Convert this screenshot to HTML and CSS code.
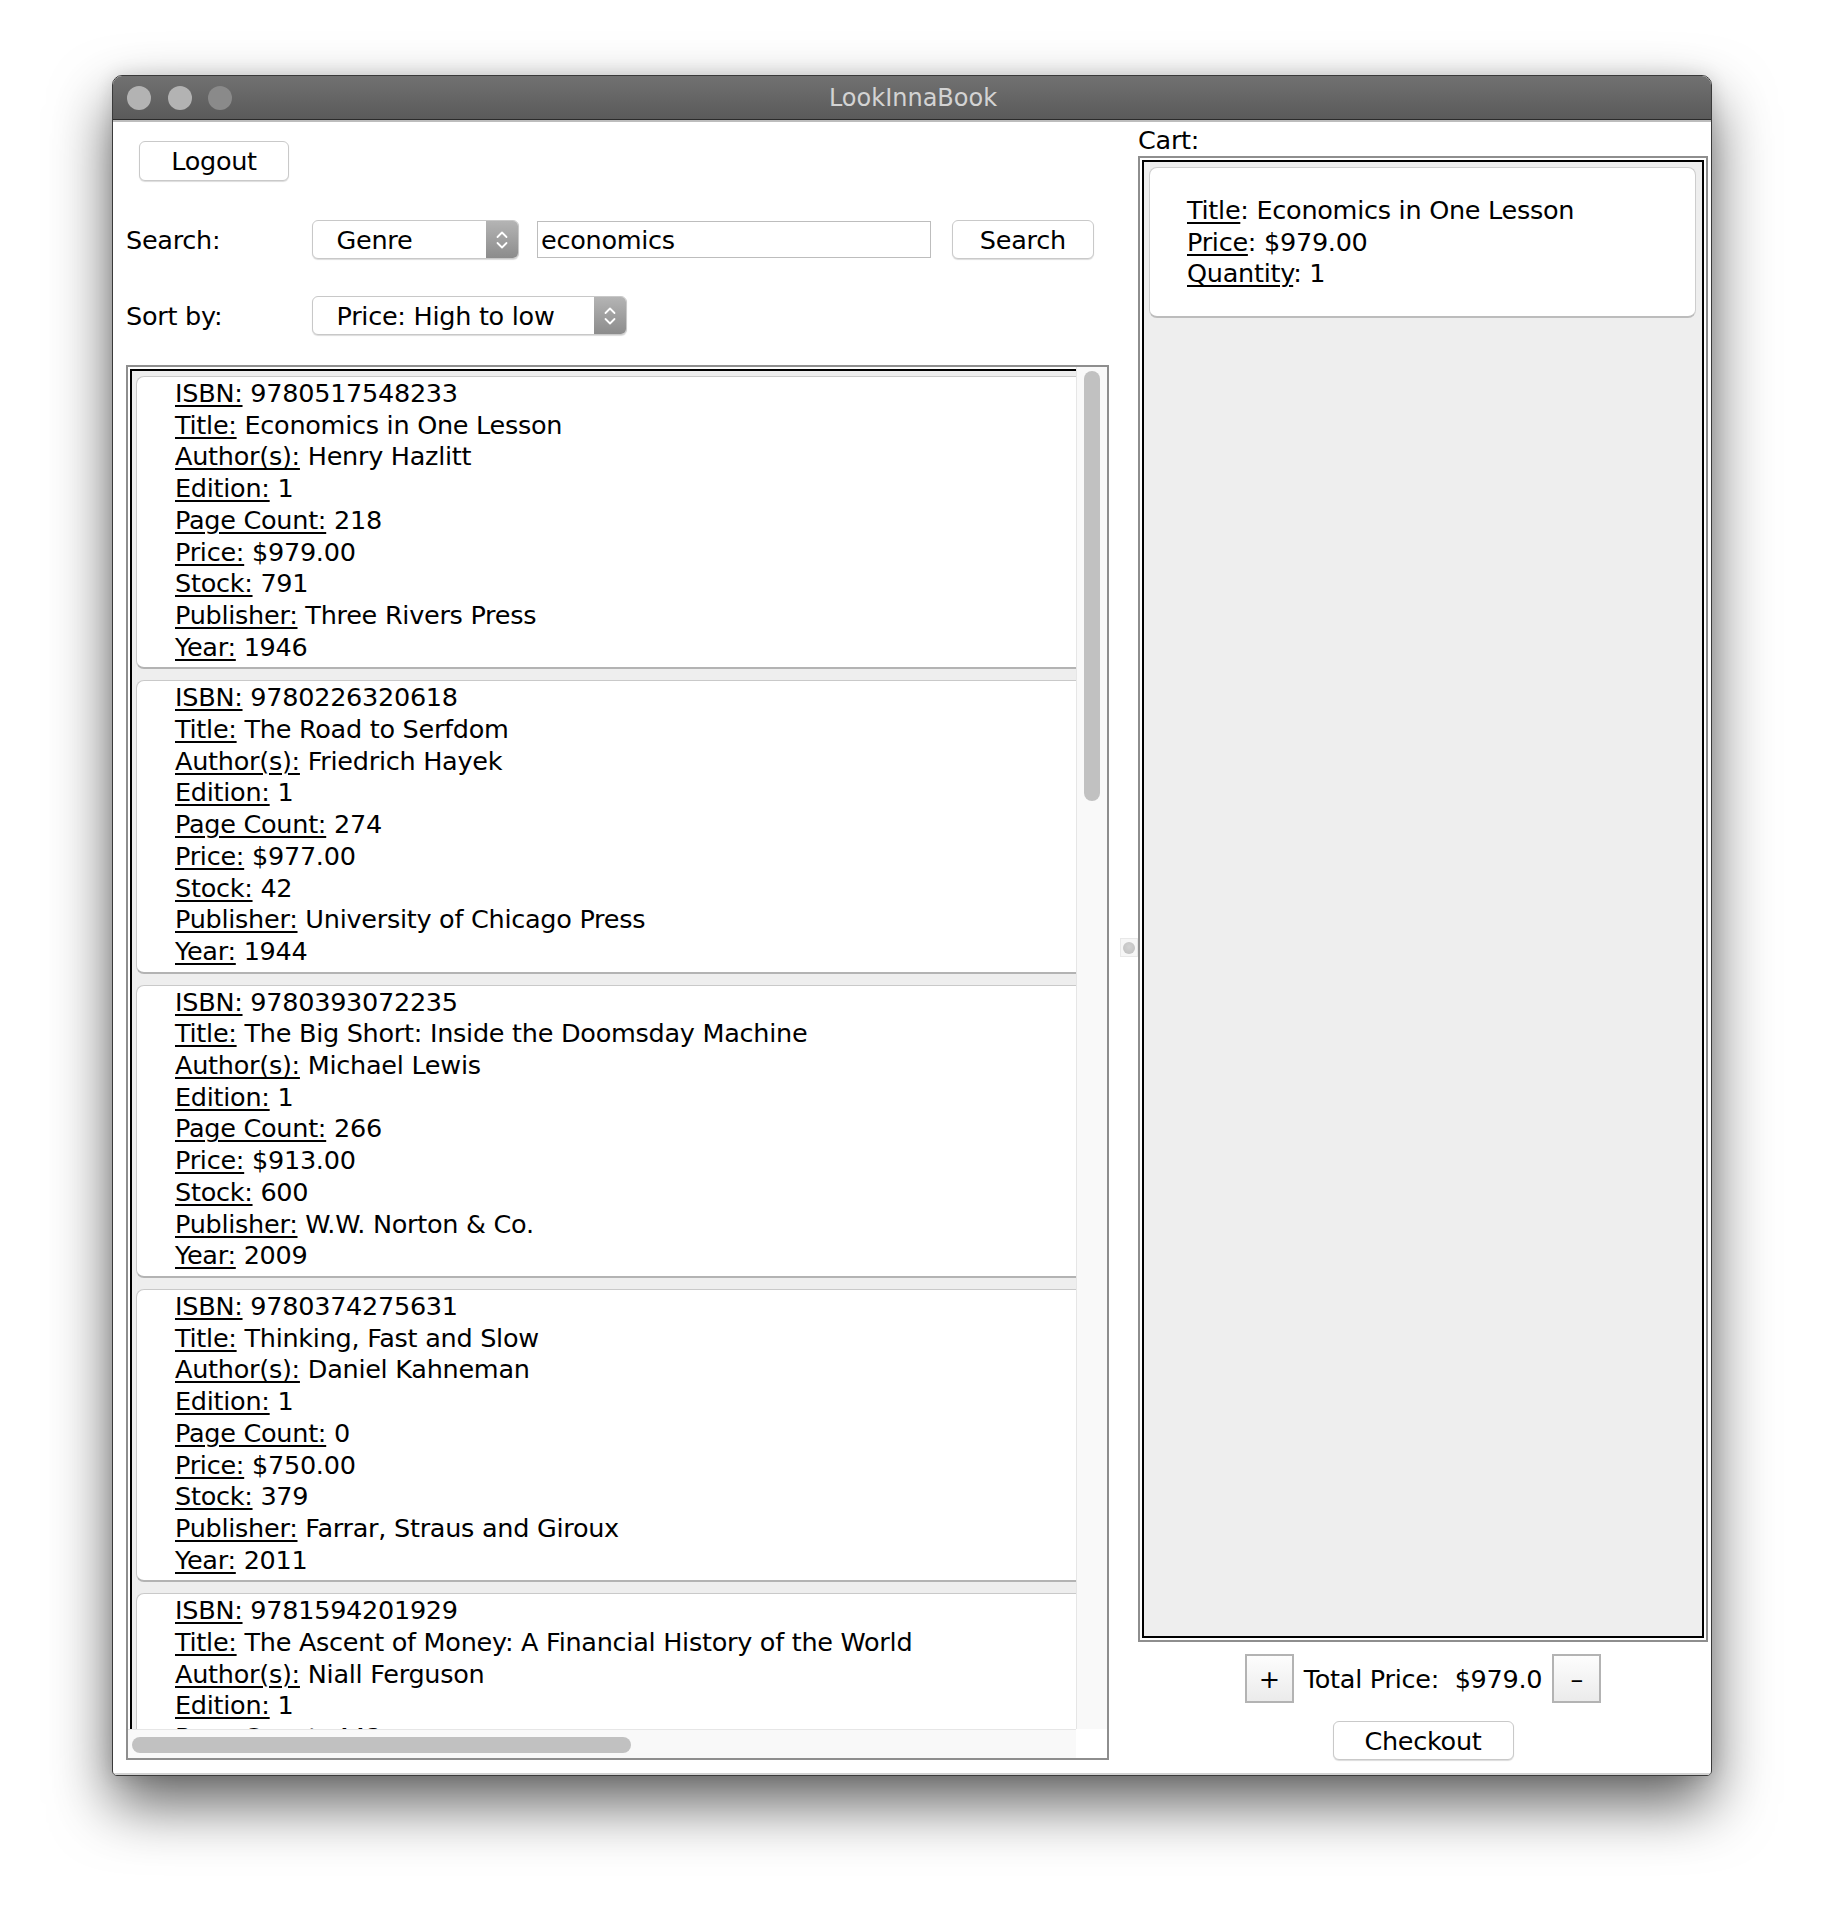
FILE: index.html
```html
<!DOCTYPE html>
<html>
<head>
<meta charset="utf-8">
<title>LookInnaBook</title>
<link rel="stylesheet" href="styles.css">
</head>
<body>
<div class="desktop">
  <div class="window">
    <div class="titlebar">
      <div class="lights">
        <span class="light"></span><span class="light"></span><span class="light dim"></span>
      </div>
      <div class="title">LookInnaBook</div>
      <div></div>
    </div>
    <div class="body">
      <div class="left">
        <button class="btn logout">Logout</button>
        <div class="row search-row">
          <div class="label">Search:</div>
          <div class="combo genre">
            <div class="combo-text">Genre</div>
            <div class="stepper"><svg width="16" height="28" viewBox="0 0 16 28"><path d="M3.5 11 L8 6.5 L12.5 11 M3.5 17 L8 21.5 L12.5 17" fill="none" stroke="#fff" stroke-width="1.8" stroke-linecap="round" stroke-linejoin="round"/></svg></div>
          </div>
          <div class="textfield">economics</div>
          <button class="btn search-btn">Search</button>
        </div>
        <div class="row sort-row">
          <div class="label">Sort by:</div>
          <div class="combo sort">
            <div class="combo-text">Price: High to low</div>
            <div class="stepper"><svg width="16" height="28" viewBox="0 0 16 28"><path d="M3.5 11 L8 6.5 L12.5 11 M3.5 17 L8 21.5 L12.5 17" fill="none" stroke="#fff" stroke-width="1.8" stroke-linecap="round" stroke-linejoin="round"/></svg></div>
          </div>
        </div>
        <div class="pane">
          <div class="viewport">
            <div class="viewport-inner">
              <div class="card">
                <div><u>ISBN:</u> 9780517548233</div>
                <div><u>Title:</u> Economics in One Lesson</div>
                <div><u>Author(s):</u> Henry Hazlitt</div>
                <div><u>Edition:</u> 1</div>
                <div><u>Page Count:</u> 218</div>
                <div><u>Price:</u> $979.00</div>
                <div><u>Stock:</u> 791</div>
                <div><u>Publisher:</u> Three Rivers Press</div>
                <div><u>Year:</u> 1946</div>
              </div>
              <div class="card">
                <div><u>ISBN:</u> 9780226320618</div>
                <div><u>Title:</u> The Road to Serfdom</div>
                <div><u>Author(s):</u> Friedrich Hayek</div>
                <div><u>Edition:</u> 1</div>
                <div><u>Page Count:</u> 274</div>
                <div><u>Price:</u> $977.00</div>
                <div><u>Stock:</u> 42</div>
                <div><u>Publisher:</u> University of Chicago Press</div>
                <div><u>Year:</u> 1944</div>
              </div>
              <div class="card">
                <div><u>ISBN:</u> 9780393072235</div>
                <div><u>Title:</u> The Big Short: Inside the Doomsday Machine</div>
                <div><u>Author(s):</u> Michael Lewis</div>
                <div><u>Edition:</u> 1</div>
                <div><u>Page Count:</u> 266</div>
                <div><u>Price:</u> $913.00</div>
                <div><u>Stock:</u> 600</div>
                <div><u>Publisher:</u> W.W. Norton &amp; Co.</div>
                <div><u>Year:</u> 2009</div>
              </div>
              <div class="card">
                <div><u>ISBN:</u> 9780374275631</div>
                <div><u>Title:</u> Thinking, Fast and Slow</div>
                <div><u>Author(s):</u> Daniel Kahneman</div>
                <div><u>Edition:</u> 1</div>
                <div><u>Page Count:</u> 0</div>
                <div><u>Price:</u> $750.00</div>
                <div><u>Stock:</u> 379</div>
                <div><u>Publisher:</u> Farrar, Straus and Giroux</div>
                <div><u>Year:</u> 2011</div>
              </div>
              <div class="card">
                <div><u>ISBN:</u> 9781594201929</div>
                <div><u>Title:</u> The Ascent of Money: A Financial History of the World</div>
                <div><u>Author(s):</u> Niall Ferguson</div>
                <div><u>Edition:</u> 1</div>
                <div><u>Page Count:</u> 442</div>
                <div><u>Price:</u> $700.00</div>
                <div><u>Stock:</u> 120</div>
                <div><u>Publisher:</u> Penguin Press</div>
                <div><u>Year:</u> 2008</div>
              </div>
            </div>
          </div>
          <div class="vscroll"><div class="vthumb"></div></div>
          <div class="hscroll"><div class="hthumb"></div></div>
          <div class="corner"></div>
        </div>
      </div>
      <div class="divider">
        <div class="handle"><span class="dot"></span></div>
      </div>
      <div class="right">
        <div class="cart-label">Cart:</div>
        <div class="cartpane">
          <div class="cart-inner">
            <div class="cart-card">
              <div><u>Title</u>: Economics in One Lesson</div>
              <div><u>Price</u>: $979.00</div>
              <div><u>Quantity</u>: 1</div>
            </div>
          </div>
        </div>
        <div class="totals">
          <button class="sq">+</button>
          <div class="total-text">Total Price:  $979.0</div>
          <button class="sq">–</button>
        </div>
        <button class="btn checkout">Checkout</button>
      </div>
    </div>
  </div>
</div>
</body>
</html>
```

FILE: styles.css
```css
html, body {
  margin: 0;
  padding: 0;
  background: #ffffff;
}

body {
  font-family: "DejaVu Sans", "Liberation Sans", sans-serif;
  font-size: 25.5px;
  letter-spacing: -0.27px;
  color: #000;
}

.desktop {
  width: 1824px;
  height: 1924px;
  box-sizing: border-box;
  padding: 75px 0 0 112px;
  overflow: hidden;
}

.window {
  width: 1600px;
  height: 1701px;
  box-sizing: border-box;
  border: 1px solid #3a3a3a;
  border-radius: 10px 10px 5px 5px;
  background: #fff;
  display: flex;
  flex-direction: column;
  overflow: hidden;
  box-shadow: 0 28px 60px rgba(0, 0, 0, 0.62), 0 0 18px rgba(0, 0, 0, 0.12);
}

.titlebar {
  height: 43px;
  flex: none;
  border-bottom: 1px solid #2a2a2a;
  background: linear-gradient(#717171, #5a5a5a);
  display: grid;
  grid-template-columns: 1fr auto 1fr;
  align-items: center;
}

.lights {
  display: flex;
  gap: 16.5px;
  padding-left: 14px;
}

.light {
  width: 24px;
  height: 24px;
  border-radius: 50%;
  background: #b3b3b3;
}

.light.dim {
  background: #8a8a8a;
}

.title {
  color: #d3d3d3;
  font-size: 24px;
  letter-spacing: 0;
  padding-left: 2px;
}

.body {
  flex: 1;
  display: flex;
  border-top: 2px solid #bdbdbd;
  border-bottom: 2px solid #d2d2d2;
  padding-right: 3px;
  min-height: 0;
}

/* Left side */
.left {
  width: 996px;
  flex: none;
  box-sizing: border-box;
  padding: 19px 0 0 13px;
}

.btn {
  box-sizing: border-box;
  background: #fff;
  border: 1px solid #c9c9c9;
  border-radius: 6px;
  box-shadow: 0 1px 1px rgba(0, 0, 0, 0.14);
  font: inherit;
  letter-spacing: inherit;
  color: #000;
  display: flex;
  align-items: center;
  justify-content: center;
  padding: 0;
}

.logout {
  margin-left: 13px;
  width: 150px;
  height: 40px;
}

.row {
  display: flex;
  align-items: center;
}

.search-row {
  margin-top: 38.5px;
  height: 40px;
}

.sort-row {
  margin-top: 36.5px;
  height: 39px;
}

.label {
  width: 185.5px;
  flex: none;
}

.combo {
  box-sizing: border-box;
  height: 39px;
  border: 1px solid #c8c8c8;
  border-radius: 6px;
  background: #fff;
  display: flex;
  box-shadow: 0 1px 1px rgba(0, 0, 0, 0.14);
  overflow: hidden;
}

.combo-text {
  flex: 1;
  padding-left: 24px;
  display: flex;
  align-items: center;
}

.stepper {
  width: 32px;
  background: linear-gradient(#b4b4b4, #8c8c8c);
  display: flex;
  align-items: center;
  justify-content: center;
}

.genre {
  width: 207px;
}

.sort {
  width: 315px;
}

.textfield {
  box-sizing: border-box;
  width: 394px;
  height: 37.5px;
  margin-left: 18.5px;
  border: 1px solid #bdbdbd;
  padding-left: 3px;
  display: flex;
  align-items: center;
}

.search-btn {
  margin-left: 20.7px;
  width: 142.3px;
  height: 39px;
}

/* List scroll pane */
.pane {
  margin-top: 30px;
  width: 983px;
  height: 1395px;
  box-sizing: border-box;
  border: 2px solid #8e8e8e;
  display: grid;
  grid-template-columns: 1fr 31px;
  grid-template-rows: 1fr 29px;
}

.viewport {
  padding: 2px 0 0 2px;
  background: #fff;
  overflow: hidden;
  min-height: 0;
}

.viewport-inner {
  height: 100%;
  box-sizing: border-box;
  border-left: 2px solid #000;
  border-top: 2px solid #000;
  background: #eeeeee;
  padding: 5px 0 0 4px;
  overflow: hidden;
}

.card {
  width: 1790px;
  box-sizing: border-box;
  background: #fff;
  border: 1px solid #c9c9c9;
  border-bottom: 2px solid #b3b3b3;
  border-radius: 8px;
  padding: 1px 0 4px 38px;
  margin-bottom: 11px;
  line-height: 31.7px;
  white-space: nowrap;
}

u {
  text-decoration-thickness: 1.5px;
  text-underline-offset: 3px;
}

.vscroll {
  background: #f9f9f9;
  border-left: 1px solid #e6e6e6;
}

.vthumb {
  margin: 4px 0 0 7px;
  width: 16px;
  height: 430px;
  border-radius: 8px;
  background: #c1c1c1;
}

.hscroll {
  background: #f9f9f9;
  border-top: 1px solid #e6e6e6;
}

.hthumb {
  margin: 6.5px 0 0 4.4px;
  width: 499px;
  height: 16px;
  border-radius: 8px;
  background: #c1c1c1;
}

.corner {
  background: #fff;
}

/* Split divider */
.divider {
  width: 29px;
  flex: none;
  display: flex;
  align-items: center;
  justify-content: flex-end;
}

.handle {
  width: 18px;
  height: 19px;
  background: #f6f6f6;
  border: 1px solid #e8e8e8;
  box-sizing: border-box;
  display: flex;
  align-items: center;
  justify-content: center;
}

.dot {
  width: 12px;
  height: 12px;
  border-radius: 50%;
  background: radial-gradient(circle at 50% 40%, #d2d2d2, #bdbdbd);
}

/* Right side */
.right {
  width: 570px;
  flex: none;
  display: flex;
  flex-direction: column;
}

.cart-label {
  padding-top: 2px;
  line-height: 32px;
}

.cartpane {
  height: 1486px;
  box-sizing: border-box;
  border: 2px solid #8e8e8e;
  padding: 2px;
  background: #fff;
}

.cart-inner {
  height: 100%;
  box-sizing: border-box;
  border: 2px solid #000;
  background: #eeeeee;
  padding: 5px 6px 5px 5px;
}

.cart-card {
  background: #fff;
  border: 1px solid #cdcdcd;
  border-bottom: 2px solid #bcbcbc;
  border-radius: 8px;
  padding: 27px 0 26px 37px;
  line-height: 31.7px;
}

.totals {
  margin-top: 12px;
  height: 49px;
  display: flex;
  align-items: center;
  justify-content: center;
}

.sq {
  box-sizing: border-box;
  width: 49px;
  height: 49px;
  border: 2px solid #b3b3b3;
  background: linear-gradient(#fdfdfd, #ebebeb);
  font: inherit;
  letter-spacing: inherit;
  color: #000;
  padding: 0;
  display: flex;
  align-items: center;
  justify-content: center;
}

.total-text {
  white-space: pre;
  margin: 0 10px;
}

.checkout {
  margin: 18px auto 0;
  width: 181px;
  height: 39px;
}
```
